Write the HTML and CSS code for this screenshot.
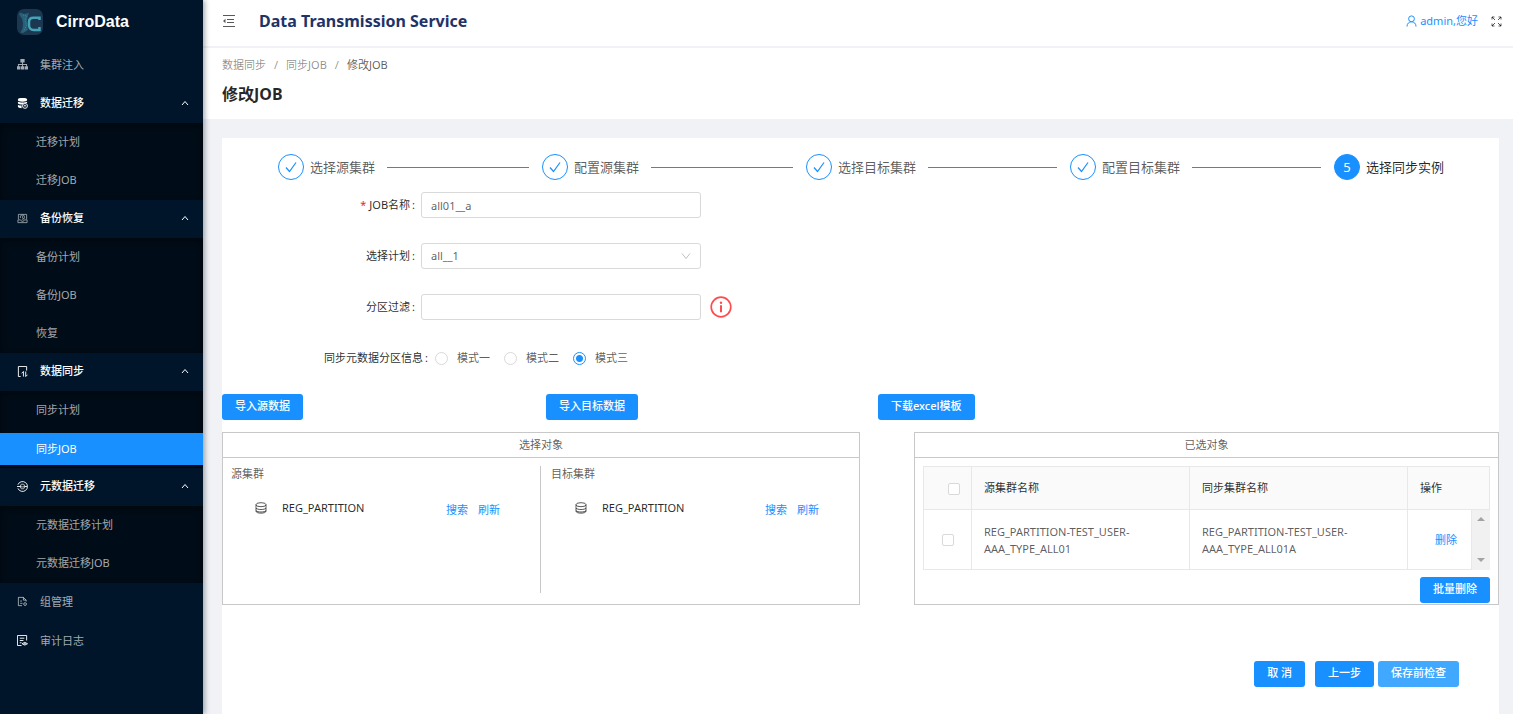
FILE: index.html
```html
<!DOCTYPE html>
<html lang="zh-CN">
<head>
<meta charset="utf-8">
<title>Data Transmission Service</title>
<link rel="stylesheet" href="styles.css">
</head>
<body>
<div class="app">
  <aside class="sidebar">
    <div class="brand">
      <svg class="brand-logo" viewBox="0 0 26 26" aria-hidden="true">
        <rect width="26" height="26" rx="7" fill="#1b3850"/>
        <path d="M3 3.500 7 5l5-1-1.500 4-.5 4 .5 5 .5 4-5 3-2.500-.5 2-4 .5-5-1-5-3-4z" fill="#286078"/>
        <path d="M6 6l4 1-2 4 1.500 5L7 22" fill="none" stroke="#3f8ea3" stroke-width=".8" stroke-dasharray="1 1"/>
        <path d="M22.500 11V8.800h-6c-3 0-4.500 1.700-4.500 4.200v3c0 2.500 1.500 5 4.500 5h6v-3" fill="none" stroke="#46a3b7" stroke-width="2.500"/>
      </svg>
      <span class="brand-name">CirroData</span>
    </div>
    <nav class="menu">
      <a class="menu-item" href="#">
        <svg class="icon" viewBox="0 0 12 12" fill="currentColor"><path d="M3.700 0h4.600v3.800H3.700zM0 7.800h3.600v3.700H0zM4.200 7.800h3.600v3.700H4.200zM8.400 7.800H12v3.700H8.400zM5.500 3.500h1v2H11V8h-1V6.500H6.500V8h-1V6.500H2V8H1V5.500h4.500z"/></svg>
        <span>集群注入</span>
      </a>
      <button class="menu-item menu-title" type="button" aria-expanded="true">
        <svg class="icon" viewBox="0 0 12 12"><path fill="currentColor" d="M1 1.500C1 .5 3 0 6 0S11 .5 11 1.500v1C11 3.400 9 4 6 4S1 3.400 1 2.500zM1 4.200c2 1 8 1 10 0v1.300H8L6 7.200c-2 0-5-.5-5-1.500zM1 7.300c1 .7 2.600 1 4 1v2.900C3 11 1 10.500 1 9.600z"/><circle cx="8.700" cy="8.600" r="2.700" fill="none" stroke="currentColor"/><path d="M7.400 8.600h2.600M8.700 7.300v1.300" stroke="currentColor"/></svg>
        <span>数据迁移</span>
        <svg class="arrow" viewBox="0 0 8 6"><path d="M1 5l3-3.500L7 5" fill="none" stroke="currentColor"/></svg>
      </button>
      <div class="submenu">
        <a class="sub-item" href="#">迁移计划</a>
        <a class="sub-item" href="#">迁移JOB</a>
      </div>
      <button class="menu-item menu-title" type="button" aria-expanded="true">
        <svg class="icon icon-dim" viewBox="0 0 12 12" fill="none" stroke="currentColor" stroke-width=".9"><path d="M1.500 7V1.500h9V7M1 7.500h3l1 1.500h2l1-1.500h3v3H1zM3.800 5.500a2.300 2.300 0 1 1 1.500 1.200M6 3.500V5l1 1"/></svg>
        <span>备份恢复</span>
        <svg class="arrow" viewBox="0 0 8 6"><path d="M1 5l3-3.500L7 5" fill="none" stroke="currentColor"/></svg>
      </button>
      <div class="submenu">
        <a class="sub-item" href="#">备份计划</a>
        <a class="sub-item" href="#">备份JOB</a>
        <a class="sub-item" href="#">恢复</a>
      </div>
      <button class="menu-item menu-title" type="button" aria-expanded="true">
        <svg class="icon" viewBox="0 0 12 12" fill="none" stroke="currentColor"><path d="M4 11.500H1.500V.5h9V5M5 8l2-2v5.500M9.500 6v5.500l2-2"/></svg>
        <span>数据同步</span>
        <svg class="arrow" viewBox="0 0 8 6"><path d="M1 5l3-3.500L7 5" fill="none" stroke="currentColor"/></svg>
      </button>
      <div class="submenu">
        <a class="sub-item" href="#">同步计划</a>
        <a class="sub-item sub-item-active" href="#" aria-current="page">同步JOB</a>
      </div>
      <button class="menu-item menu-title" type="button" aria-expanded="true">
        <svg class="icon" viewBox="0 0 12 12" fill="none" stroke="currentColor"><path d="M1 4a5.400 5.400 0 1 1 0 4M0 6h4M8.500 6H11"/><path d="M4 4.200C4 3.300 8 3.300 8 4.200v3.600c0 .9-4 .9-4 0zM4 6c1 .6 3 .6 4 0" stroke-width=".8"/></svg>
        <span>元数据迁移</span>
        <svg class="arrow" viewBox="0 0 8 6"><path d="M1 5l3-3.500L7 5" fill="none" stroke="currentColor"/></svg>
      </button>
      <div class="submenu">
        <a class="sub-item" href="#">元数据迁移计划</a>
        <a class="sub-item" href="#">元数据迁移JOB</a>
      </div>
      <a class="menu-item" href="#">
        <svg class="icon" viewBox="0 0 12 12" fill="none" stroke="currentColor"><path d="M5.500 10.500h-4v-9h5.500l3 3V6M7 1.500v3h3M3.500 5.500h2M3.500 8h2.500"/><circle cx="8.800" cy="8.800" r="1.500"/></svg>
        <span>组管理</span>
      </a>
      <a class="menu-item" href="#">
        <svg class="icon icon-light" viewBox="0 0 12 12" fill="none" stroke="currentColor"><path d="M5 11.500H.5V.5h10V6M3 3.500h5M3 6h4M3 8.500h2M5.500 9.500q3-3 6 0-3 3-6 0z"/><circle cx="8.500" cy="9.500" r=".6"/></svg>
        <span>审计日志</span>
      </a>
    </nav>
  </aside>

  <div class="main">
    <header class="topbar">
      <button class="icon-button" type="button" aria-label="收起菜单">
        <svg class="fold-icon" viewBox="0 0 14 14" fill="none" stroke="currentColor"><path d="M1 1.500h12M5 5.500h7M5 8.500h7M1 12.500h12"/><path d="M3.500 4.800v4.400L1 7z" fill="currentColor" stroke="none"/></svg>
      </button>
      <h1 class="app-title">Data Transmission Service</h1>
      <a class="user" href="#">
        <svg class="user-icon" viewBox="0 0 11 12" fill="none" stroke="currentColor"><circle cx="5.500" cy="3.800" r="2.900"/><path d="M1 11.500c0-3 2-4.700 4.500-4.700s4.500 1.700 4.500 4.700"/></svg>
        <span>admin,您好</span>
      </a>
      <button class="icon-button" type="button" aria-label="全屏">
        <svg class="full-icon" viewBox="0 0 11 11" fill="none" stroke="currentColor"><path d="M1 3.500V1h2.500M1 1l3 3M7.500 1H10v2.500M10 1 7 4M1 7.500V10h2.500M1 10l3-3M10 7.500V10H7.500M10 10 7 7"/></svg>
      </button>
    </header>

    <div class="page-head">
      <nav class="crumbs" aria-label="面包屑">
        <a href="#">数据同步</a><span>/</span><a href="#">同步JOB</a><span>/</span><span class="crumb-current">修改JOB</span>
      </nav>
      <h2 class="page-title">修改JOB</h2>
    </div>

    <main class="card">
      <ol class="steps">
        <li class="step"><span class="step-dot"><svg class="check" viewBox="0 0 12 12"><path d="M1 6.500l3.500 4L11 1.500" fill="none" stroke="currentColor" stroke-width="1.200"/></svg></span><span>选择源集群</span></li>
        <li class="step"><span class="step-dot"><svg class="check" viewBox="0 0 12 12"><path d="M1 6.500l3.500 4L11 1.500" fill="none" stroke="currentColor" stroke-width="1.200"/></svg></span><span>配置源集群</span></li>
        <li class="step"><span class="step-dot"><svg class="check" viewBox="0 0 12 12"><path d="M1 6.500l3.500 4L11 1.500" fill="none" stroke="currentColor" stroke-width="1.200"/></svg></span><span>选择目标集群</span></li>
        <li class="step"><span class="step-dot"><svg class="check" viewBox="0 0 12 12"><path d="M1 6.500l3.500 4L11 1.500" fill="none" stroke="currentColor" stroke-width="1.200"/></svg></span><span>配置目标集群</span></li>
        <li class="step step-current" aria-current="step"><span class="step-dot">5</span><span>选择同步实例</span></li>
      </ol>

      <form class="form">
        <div class="field">
          <label class="label" for="job-name"><span class="required">*</span>JOB名称<span class="colon">:</span></label>
          <input class="control" id="job-name" type="text" value="all01__a">
        </div>
        <div class="field">
          <label class="label" for="plan">选择计划<span class="colon">:</span></label>
          <div class="select-box">
            <select class="control" id="plan"><option>all__1</option></select>
            <svg class="caret" viewBox="0 0 10 8"><path d="M1 1.500l4 5 4-5" fill="none" stroke="currentColor"/></svg>
          </div>
        </div>
        <div class="field">
          <label class="label" for="filter">分区过滤<span class="colon">:</span></label>
          <input class="control" id="filter" type="text">
          <svg class="info" viewBox="0 0 22 22" role="img" aria-label="提示"><circle cx="11" cy="11" r="9.800" fill="none" stroke="currentColor" stroke-width="1.700"/><circle cx="11" cy="6.800" r="1.200" fill="currentColor"/><path d="M11 9.200v7" stroke="currentColor" stroke-width="2"/></svg>
        </div>
        <div class="field" role="radiogroup" aria-labelledby="mode-label">
          <span class="label label-wide" id="mode-label">同步元数据分区信息<span class="colon">:</span></span>
          <label class="radio"><input type="radio" name="mode">模式一</label>
          <label class="radio"><input type="radio" name="mode">模式二</label>
          <label class="radio"><input type="radio" name="mode" checked>模式三</label>
        </div>
      </form>

      <div class="imports">
        <button class="btn" type="button">导入源数据</button>
        <button class="btn" type="button">导入目标数据</button>
        <button class="btn" type="button">下载excel模板</button>
      </div>

      <div class="panels">
        <section class="panel">
          <h3 class="panel-title">选择对象</h3>
          <div class="clusters">
            <div class="cluster">
              <h4 class="cluster-title">源集群</h4>
              <div class="cluster-row">
                <svg class="db" viewBox="0 0 12 12" fill="none" stroke="currentColor"><ellipse cx="6" cy="2.700" rx="5" ry="2"/><path d="M1 2.700v6.500c0 2.600 10 2.600 10 0V2.700M1 6c1 2 9 2 10 0M1 8.500c1 2 9 2 10 0"/></svg>
                <span class="cluster-name">REG_PARTITION</span>
                <span class="cluster-links"><a class="link" href="#">搜索</a><a class="link" href="#">刷新</a></span>
              </div>
            </div>
            <div class="cluster">
              <h4 class="cluster-title">目标集群</h4>
              <div class="cluster-row">
                <svg class="db" viewBox="0 0 12 12" fill="none" stroke="currentColor"><ellipse cx="6" cy="2.700" rx="5" ry="2"/><path d="M1 2.700v6.500c0 2.600 10 2.600 10 0V2.700M1 6c1 2 9 2 10 0M1 8.500c1 2 9 2 10 0"/></svg>
                <span class="cluster-name">REG_PARTITION</span>
                <span class="cluster-links"><a class="link" href="#">搜索</a><a class="link" href="#">刷新</a></span>
              </div>
            </div>
          </div>
        </section>

        <section class="panel">
          <h3 class="panel-title">已选对象</h3>
          <div class="selected">
            <table class="table">
              <colgroup><col class="col-check"><col><col><col class="col-action"><col class="col-scroll"></colgroup>
              <thead>
                <tr><th class="cell-check cell-check-all"><input type="checkbox" aria-label="全选"></th><th>源集群名称</th><th>同步集群名称</th><th colspan="2">操作</th></tr>
              </thead>
              <tbody>
                <tr>
                  <td class="cell-check"><input type="checkbox" aria-label="选择此行"></td>
                  <td>REG_PARTITION-TEST_USER-AAA_TYPE_ALL01</td>
                  <td>REG_PARTITION-TEST_USER-AAA_TYPE_ALL01A</td>
                  <td class="cell-action"><a class="link" href="#">删除</a></td>
                  <td class="cell-scroll"><div class="scrollbar"><svg viewBox="0 0 8 4"><path d="M0 4l4-4 4 4z" fill="currentColor"/></svg><svg viewBox="0 0 8 4"><path d="M0 0l4 4 4-4z" fill="currentColor"/></svg></div></td>
                </tr>
              </tbody>
            </table>
            <button class="btn" type="button">批量删除</button>
          </div>
        </section>
      </div>

      <div class="actions">
        <button class="btn btn-cancel" type="button">取 消</button>
        <button class="btn" type="button">上一步</button>
        <button class="btn btn-light" type="button">保存前检查</button>
      </div>
    </main>
  </div>
</div>
</body>
</html>
```
FILE: styles.css
```css
* { box-sizing: border-box; }

body {
  margin: 0;
  background: #f0f2f5;
  color: rgba(0, 0, 0, 0.65);
  font: 11px/18px "Noto Sans", "Noto Sans CJK SC", sans-serif;
}

a { color: inherit; text-decoration: none; }
button, input, select { font: inherit; color: inherit; }
h1, h2, h3, h4, ol { margin: 0; padding: 0; font-weight: 400; }
svg { display: block; flex: none; }

.app { display: flex; min-height: 100vh; }

/* Sidebar */
.sidebar {
  z-index: 1;
  flex: none;
  width: 203px;
  background: #001529;
  box-shadow: 2px 0 5px rgba(0, 21, 41, 0.35);
}
.brand { display: flex; align-items: center; gap: 13px; height: 46px; padding: 0 17px 2px; }
.brand-logo { width: 26px; height: 26px; }
.brand-name { color: #fff; font: 700 16px/24px "Liberation Sans", sans-serif; }

.menu-item {
  display: flex;
  align-items: center;
  gap: 12px;
  width: 100%;
  height: 39px;
  padding: 0 14px 2px 17px;
  border: 0;
  background: none;
  color: rgba(255, 255, 255, 0.65);
  text-align: left;
}
.menu-title { height: 38px; color: #fff; font-weight: 500; }
.menu-item + .menu-title { height: 38px; }
.icon { width: 11px; height: 11px; }
.icon-dim { opacity: 0.65; }
.icon-light { color: #fff; }
.arrow { width: 8px; height: 6px; margin-left: auto; }

.submenu {
  display: flow-root;
  padding-bottom: 1px;
  background: #000c17;
  box-shadow: inset 0 2px 6px rgba(0, 0, 0, 0.45);
}
.sub-item {
  display: flex;
  align-items: center;
  height: 38px;
  padding-left: 36px;
  color: rgba(255, 255, 255, 0.65);
}
.sub-item-active {
  height: 32px;
  margin: 4px 0 2px;
  background: #1890ff;
  color: #fff;
}

/* Header */
.main { display: flex; flex: 1; flex-direction: column; min-width: 0; }
.topbar {
  display: flex;
  align-items: center;
  height: 48px;
  padding: 0 11px 4px 19px;
  border-bottom: 2px solid #f0f2f5;
  background: #fff;
}
.icon-button { padding: 0; border: 0; background: none; }
.fold-icon { width: 14px; height: 14px; }
.full-icon { width: 11px; height: 11px; }
.app-title { margin: 0 auto 0 23px; color: #1f3368; font-size: 16px; line-height: 24px; font-weight: 700; }
.user { display: flex; align-items: center; gap: 3px; margin-right: 13px; color: #1890ff; }
.user-icon { width: 11px; height: 12px; }

.page-head { padding: 8px 19px 13px; background: #fff; }
.crumbs { display: flex; gap: 8px; color: rgba(0, 0, 0, 0.45); }
.crumb-current { color: rgba(0, 0, 0, 0.65); }
.page-title { margin-top: 8px; color: rgba(0, 0, 0, 0.85); font-size: 16px; line-height: 24px; font-weight: 700; }

.card { flex: 1; margin: 19px 14px 0 19px; padding-top: 16px; background: #fff; }

/* Steps */
.steps {
  display: flex;
  padding: 0 55px 0 56px;
  list-style: none;
  font-size: 13px;
  line-height: 24px;
}
.step { display: flex; flex: 1; align-items: center; gap: 6px; white-space: nowrap; }
.step::after { flex: 1; height: 1px; margin: 0 13px 0 6px; background: #1890ff; content: ""; }
.step-current { flex: none; color: rgba(0, 0, 0, 0.85); }
.step-current::after { content: none; }
.step-dot {
  display: flex;
  align-items: center;
  justify-content: center;
  width: 26px;
  height: 26px;
  border: 1px solid #1890ff;
  border-radius: 50%;
  color: #1890ff;
}
.step-current .step-dot { background: #1890ff; color: #fff; }
.check { width: 12px; height: 12px; }

/* Form */
.form { display: grid; gap: 25px; padding-top: 12px; }
.field { display: flex; align-items: center; height: 26px; }
.label { width: 199px; padding-right: 6px; color: rgba(0, 0, 0, 0.85); text-align: right; }
.label-wide { width: 213px; padding-right: 7px; }
.required { margin-right: 3px; color: #f5222d; }
.colon { margin-left: 2px; }
.control {
  width: 280px;
  height: 26px;
  padding: 0 9px;
  border: 1px solid #d9d9d9;
  border-radius: 3px;
  background: #fff;
}
.select-box { position: relative; }
.select-box .control { display: block; appearance: none; }
.caret { position: absolute; top: 9px; right: 10px; width: 10px; height: 8px; color: #bfbfbf; pointer-events: none; }
.info { width: 22px; height: 22px; margin-left: 9px; color: #ff4d4f; }

.radio { display: flex; align-items: center; gap: 9px; margin-right: 14px; }
.radio input {
  width: 13px;
  height: 13px;
  margin: 0;
  border: 1px solid #d9d9d9;
  border-radius: 50%;
  appearance: none;
}
.radio input:checked {
  border-color: #1890ff;
  background: radial-gradient(circle, #1890ff 3px, #fff 4px);
}

/* Buttons */
.btn {
  height: 26px;
  padding: 0 13px 2px;
  border: 0;
  border-radius: 3px;
  background: #1890ff;
  color: #fff;
  font-weight: 500;
  line-height: 18px;
  white-space: nowrap;
}
.btn-light { background: #40a9ff; }
.imports {
  display: grid;
  grid-template-columns: 324fr 332fr 621fr;
  justify-items: start;
  padding-top: 23px;
}

/* Panels */
.panels { display: grid; grid-template-columns: 638fr 585fr; gap: 54px; margin-top: 12px; }
.panel { display: flex; flex-direction: column; min-height: 173px; border: 1px solid #c8c8c8; }
.panel-title { height: 25px; border-bottom: 1px solid #c8c8c8; font-size: 11px; line-height: 24px; text-align: center; }
.clusters { display: grid; grid-template-columns: 317fr 319fr; flex: 1; padding: 8px 0 11px; }
.cluster { padding: 0 40px 0 8px; }
.cluster + .cluster { padding-left: 10px; border-left: 1px solid #c8c8c8; }
.cluster-title { font-size: 11px; line-height: 16px; }
.cluster-row { display: flex; align-items: center; gap: 8px; margin-top: 15px; padding-left: 24px; }
.db { width: 12px; height: 12px; }
.cluster-name { margin: 0 auto 0 7px; color: rgba(0, 0, 0, 0.85); }
.cluster-links { display: flex; gap: 10px; padding-top: 4px; }
.link { color: #1890ff; }

.selected { display: flex; flex-direction: column; align-items: flex-end; gap: 7px; padding: 8px 8px 1px 8px; }
.table {
  width: 100%;
  table-layout: fixed;
  border-collapse: collapse;
  line-height: 17px;
}
.col-check { width: 48px; }
.col-action { width: 64px; }
.col-scroll { width: 18px; }
.table th, .table td { height: 60px; padding: 0 12px; border: 1px solid #e8e8e8; text-align: left; }
.table th { height: 43px; padding-bottom: 2px; background: #fafafa; color: rgba(0, 0, 0, 0.85); font-weight: 400; }
.table .cell-check { padding: 0 0 2px; text-align: center; }
.table .cell-check-all { padding-left: 12px; }
.table .cell-action { padding: 0 10px 0 0; text-align: right; }
.table .cell-action .link { margin-right: 4px; }
.table .cell-scroll { padding: 0; border-width: 0; background: #f1f1f1; }
.cell-check input {
  width: 12px;
  height: 12px;
  margin: 0;
  border: 1px solid #d9d9d9;
  border-radius: 2px;
  background: #fff;
  vertical-align: middle;
  appearance: none;
}
.scrollbar {
  display: flex;
  flex-direction: column;
  align-items: center;
  justify-content: space-between;
  height: 59px;
  padding: 7px 0;
  color: #a3a3a3;
}
.scrollbar svg { width: 8px; height: 4px; }

.actions { display: flex; justify-content: flex-end; gap: 4px; margin-top: 56px; padding: 0 40px 27px; }
.btn-cancel { margin-right: 6px; }
```
